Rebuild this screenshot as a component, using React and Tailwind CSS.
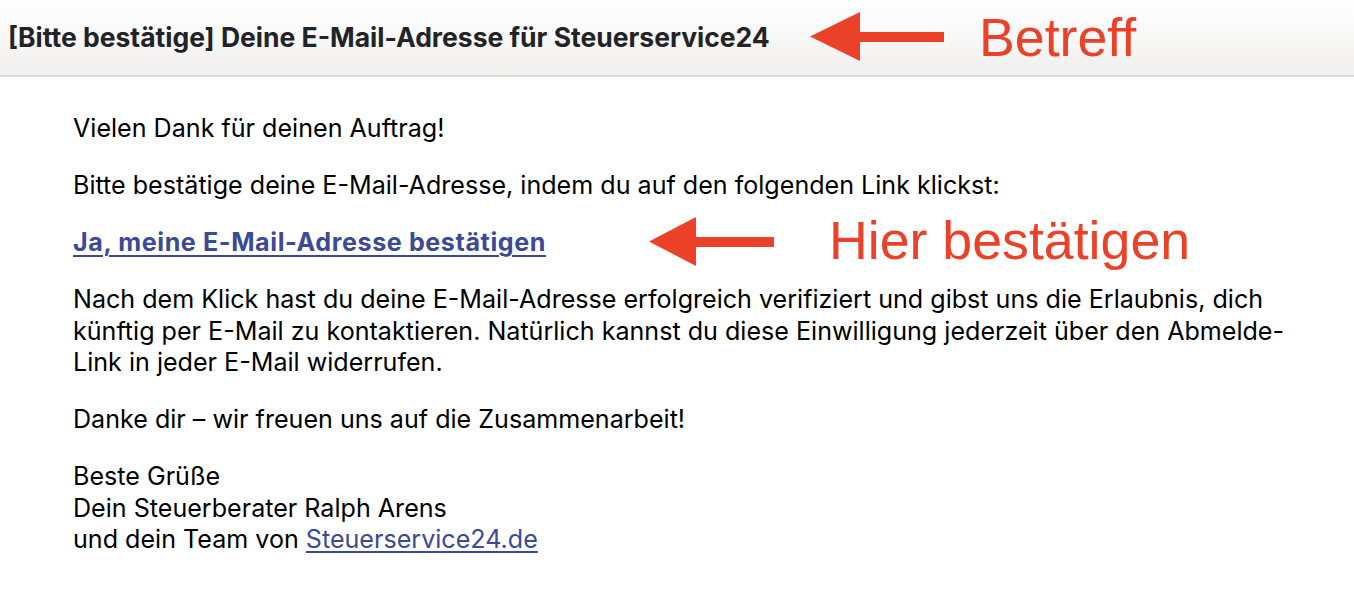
export default function App() {
  const body = { fontFamily: 'Inter, "Noto Sans", sans-serif' };
  const ann = { fontFamily: '"Liberation Sans", Arial, sans-serif' };
  return (
    <div className="relative w-[1354px] h-[608px] bg-white overflow-hidden" style={body}>
      <div className="h-[77px] bg-gradient-to-b from-[#ffffff] to-[#f1f0ef] border-b-2 border-[#dadada] flex items-center pl-[8px]">
        <h1 className="text-[26.5px] font-bold text-[#222326]">[Bitte bestätige] Deine E-Mail-Adresse für Steuerservice24</h1>
      </div>
      <div className="pl-[73px] pr-[30px] pt-[36px] text-[25.1px] leading-[31.5px] text-black">
        <p className="mb-[25.5px]">Vielen Dank für deinen Auftrag!</p>
        <p className="mb-[25.5px]">Bitte bestätige deine E-Mail-Adresse, indem du auf den folgenden Link klickst:</p>
        <p className="mb-[25.5px]">
          <a className="font-bold underline text-[#3b4a96] tracking-[0.6px] decoration-[2px] underline-offset-[4px]">Ja, meine E-Mail-Adresse bestätigen</a>
        </p>
        <p className="mb-[25.5px]">Nach dem Klick hast du deine E-Mail-Adresse erfolgreich verifiziert und gibst uns die Erlaubnis, dich künftig per E-Mail zu kontaktieren. Natürlich kannst du diese Einwilligung jederzeit über den Abmelde-Link in jeder E-Mail widerrufen.</p>
        <p className="mb-[25.5px]">Danke dir – wir freuen uns auf die Zusammenarbeit!</p>
        <p>
          Beste Grüße<br />
          Dein Steuerberater Ralph Arens<br />
          und dein Team von <a className="underline text-[#3b4a96] underline-offset-[3px]">Steuerservice24.de</a>
        </p>
      </div>

      <svg className="absolute left-[800px] top-[0px]" width="160" height="76" viewBox="800 0 160 76">
        <polygon points="810,36.5 860,12 860,61" fill="#ea4128" />
        <rect x="859" y="32" width="85" height="10" fill="#ea4128" />
      </svg>
      <div className="absolute left-[979px] top-[10.5px] text-[53.7px] leading-none text-[#ea4128]" style={ann}>Betreff</div>

      <svg className="absolute left-[640px] top-[210px]" width="150" height="64" viewBox="640 210 150 64">
        <polygon points="649,241.5 696,217 696,266" fill="#ea4128" />
        <rect x="695" y="237" width="79" height="10" fill="#ea4128" />
      </svg>
      <div className="absolute left-[829px] top-[213.5px] text-[53.7px] leading-none text-[#ea4128]" style={ann}>Hier bestätigen</div>
    </div>
  );
}
